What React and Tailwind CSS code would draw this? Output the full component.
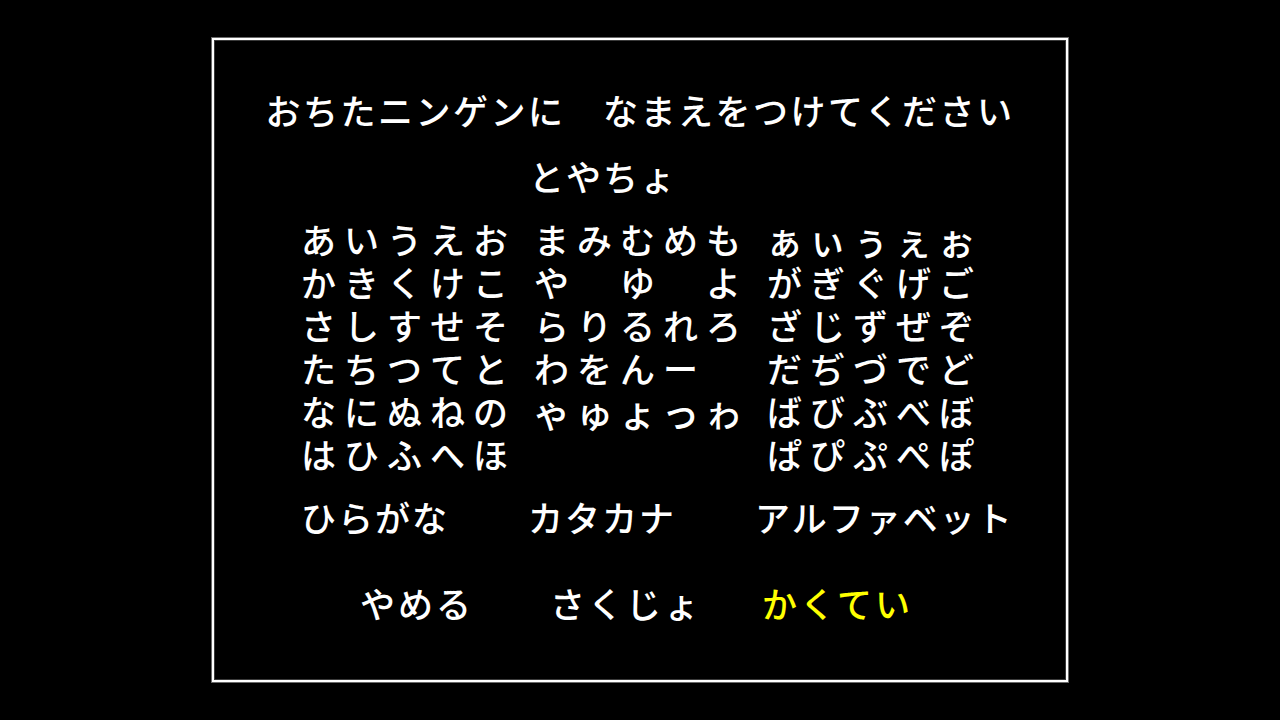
import React from 'react'

const groups = [
  [
    'あいうえお',
    'かきくけこ',
    'さしすせそ',
    'たちつてと',
    'なにぬねの',
    'はひふへほ',
  ],
  [
    'まみむめも',
    'や　ゆ　よ',
    'らりるれろ',
    'わをんー　',
    'ゃゅょっゎ',
    '　　　　　',
  ],
  [
    'ぁぃぅぇぉ',
    'がぎぐげご',
    'ざじずぜぞ',
    'だぢづでど',
    'ばびぶべぼ',
    'ぱぴぷぺぽ',
  ],
]

const small = 'ぁぃぅぇぉゃゅょっゎ'

const font = { fontFamily: '"Noto Sans CJK JP", "Noto Sans", sans-serif' }

const App = () => {
  return (
    <div className="w-[1280px] h-[720px] bg-black flex items-center justify-center text-white font-medium" style={font}>
      <div className="w-[856px] h-[644px] border-2 border-white shadow-[0_0_0_1px_#6a6a6a,inset_0_0_0_1px_#3a3a3a] flex flex-col pt-[48px]">
        {/* title */}
        <div className="text-[35px] leading-[43px] tracking-[2.5px] text-center">
          おちたニンゲンに　なまえをつけてください
        </div>

        {/* current name */}
        <div className="mt-[23px] pl-[315px] text-[35px] leading-[43px] tracking-[2px]">
          とやちょ
        </div>

        {/* kana grid */}
        <div className="mt-[20px] pl-[83px] flex gap-[18px]">
          {groups.map((rows, gi) => (
            <div key={gi} className="flex flex-col">
              {rows.map((row, ri) => (
                <div key={ri} className="flex h-[43px]">
                  {row.split('').map((ch, ci) => (
                    <span
                      key={ci}
                      className={
                        small.includes(ch)
                          ? 'w-[43px] h-[43px] text-[38px] leading-[43px] text-center'
                          : 'w-[43px] h-[43px] text-[35px] leading-[43px] text-center'
                      }
                    >
                      {ch === '　' ? '' : ch}
                    </span>
                  ))}
                </div>
              ))}
            </div>
          ))}
        </div>

        {/* mode select */}
        <div className="mt-[20px] pl-[87px] flex text-[35px] leading-[43px] tracking-[2px]">
          <span className="w-[227px]">ひらがな</span>
          <span className="w-[227px]">カタカナ</span>
          <span>アルファベット</span>
        </div>

        {/* actions */}
        <div className="mt-[43px] pl-[146px] flex text-[35px] leading-[43px] tracking-[3px]">
          <span className="w-[190px]">やめる</span>
          <span className="w-[212px]">さくじょ</span>
          <span className="text-[#ffff00]">かくてい</span>
        </div>
      </div>
    </div>
  )
}

export default App
